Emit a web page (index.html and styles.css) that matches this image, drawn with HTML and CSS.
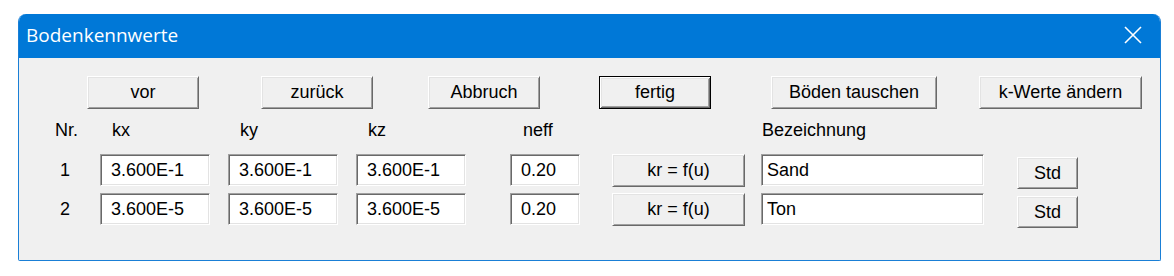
FILE: index.html
```html
<!DOCTYPE html>
<html lang="de">
<head>
    <meta charset="UTF-8">
    <title>Bodenkennwerte</title>
    <link rel="stylesheet" href="styles.css">
</head>
<body>
    <div class="window">
        <div class="titlebar">
            <span class="title">Bodenkennwerte</span>
            <svg class="close" width="18" height="18" viewBox="0 0 18 18">
                <path d="M1 1 L17 17 M17 1 L1 17" stroke="#fff" stroke-width="1.6" fill="none"/>
            </svg>
        </div>

        <div class="content">
            <div class="buttons">
                <button class="btn b-vor">vor</button>
                <button class="btn b-zurueck">zurück</button>
                <button class="btn b-abbruch">Abbruch</button>
                <button class="btn default b-fertig">fertig</button>
                <button class="btn b-tauschen">Böden tauschen</button>
                <button class="btn b-kwerte">k-Werte ändern</button>
            </div>

            <div class="row header">
                <span class="c-nr">Nr.</span>
                <span class="c-k first">kx</span>
                <span class="c-k">ky</span>
                <span class="c-k">kz</span>
                <span class="c-neff">neff</span>
                <span class="c-kr"></span>
                <span class="c-bez">Bezeichnung</span>
            </div>

            <div class="row">
                <span class="c-nr num">1</span>
                <input class="field c-k first" value="3.600E-1">
                <input class="field c-k" value="3.600E-1">
                <input class="field c-k" value="3.600E-1">
                <input class="field c-neff" value="0.20">
                <button class="btn c-kr">kr = f(u)</button>
                <input class="field c-bez" value="Sand">
                <button class="btn c-std">Std</button>
            </div>

            <div class="row second">
                <span class="c-nr num">2</span>
                <input class="field c-k first" value="3.600E-5">
                <input class="field c-k" value="3.600E-5">
                <input class="field c-k" value="3.600E-5">
                <input class="field c-neff" value="0.20">
                <button class="btn c-kr">kr = f(u)</button>
                <input class="field c-bez" value="Ton">
                <button class="btn c-std">Std</button>
            </div>
        </div>
    </div>
</body>
</html>
```

FILE: styles.css
```css
body {
    margin: 0;
    background: #ffffff;
    font-family: 'Liberation Sans', Arial, sans-serif;
    font-size: 18px;
    color: #000;
}
.window {
    margin: 14px 0 0 18px;
    width: 1141px;
    border: 1px solid #1a7fd6;
    border-top: none;
    border-radius: 8px 8px 2px 2px;
    overflow: hidden;
}
.titlebar {
    height: 44px;
    background: #0078d7;
    display: flex;
    align-items: center;
    justify-content: space-between;
    padding: 0 18px 0 7px;
}
.title {
    font-family: 'Open Sans', 'Noto Sans', sans-serif;
    font-size: 19px;
    color: #fff;
    margin-top: -2px;
}
.close {
    margin-top: -3px;
}
.content {
    background: #f0f0f0;
    height: 202px;
    padding-top: 18px;
    box-sizing: border-box;
}
.buttons {
    display: flex;
    height: 33px;
}
.btn {
    font-family: 'Liberation Sans', Arial, sans-serif;
    font-size: 18px;
    color: #000;
    background: #f0f0f0;
    height: 33px;
    padding: 0;
    border: 1px solid;
    border-color: #ffffff #696969 #696969 #ffffff;
    box-shadow: inset 1px 1px 0 #e3e3e3, inset -1px -1px 0 #a0a0a0;
}
.btn.default {
    border: 1px solid #000;
    box-shadow: inset 1px 1px 0 #fff, inset -1px -1px 0 #696969, inset 2px 2px 0 #e3e3e3, inset -2px -2px 0 #a0a0a0;
}
.b-vor { margin-left: 68px; width: 112px; }
.b-zurueck { margin-left: 62px; width: 112px; }
.b-abbruch { margin-left: 55px; width: 112px; }
.b-fertig { margin-left: 59px; width: 112px; }
.b-tauschen { margin-left: 60px; width: 166px; }
.b-kwerte { margin-left: 42px; width: 163px; }

.row {
    display: flex;
    align-items: flex-start;
    height: 33px;
    margin-top: 6px;
}
.row.header {
    height: 24px;
    line-height: 24px;
    margin-top: 9px;
    margin-bottom: 12px;
}
.c-nr {
    width: 45px;
    margin-left: 36px;
    flex: none;
}
.num {
    line-height: 32px;
    padding-left: 5px;
    box-sizing: border-box;
}
.c-k {
    width: 110px;
    margin-left: 18px;
    flex: none;
    box-sizing: border-box;
}
.c-k.first {
    margin-left: 0;
}
.header .c-k {
    padding-left: 12px;
}
.c-neff {
    width: 70px;
    margin-left: 44px;
    flex: none;
    box-sizing: border-box;
}
.header .c-neff {
    padding-left: 13px;
}
.c-kr {
    width: 133px;
    margin-left: 32px;
    flex: none;
}
.c-bez {
    width: 223px;
    margin-left: 16px;
    flex: none;
    box-sizing: border-box;
}
.header .c-bez {
    padding-left: 1px;
}
.c-std {
    width: 61px;
    margin-left: 33px;
    margin-top: 3px;
    height: 32px;
}
.field {
    height: 32px;
    box-sizing: border-box;
    font-family: 'Liberation Sans', Arial, sans-serif;
    font-size: 18px;
    color: #000;
    background: #fff;
    padding: 0 0 0 10px;
    border: 1px solid;
    border-color: #a0a0a0 #ffffff #ffffff #a0a0a0;
    box-shadow: inset 1px 1px 0 #696969, inset -1px -1px 0 #e3e3e3;
    outline: none;
}
.field.c-neff {
    padding-left: 10px;
}
.field.c-bez {
    padding-left: 5px;
}
```
